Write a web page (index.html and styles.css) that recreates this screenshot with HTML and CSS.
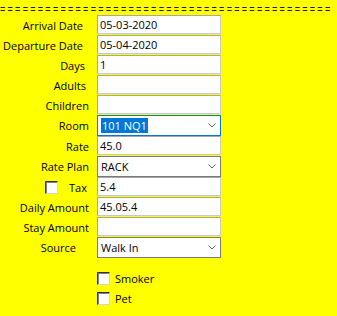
FILE: index.html
```html
<!DOCTYPE html>
<html lang="en">
<head>
<meta charset="utf-8" />
<title>Reservation</title>
<link rel="stylesheet" href="styles.css">
</head>
<body>
<div class="rule">============================================</div>
<div class="form">
  <label class="lbl lbl-date">Arrival Date</label>
  <div class="box">05-03-2020</div>
  <label class="lbl lbl-date">Departure Date</label>
  <div class="box">05-04-2020</div>
  <label class="lbl lbl-days">Days</label>
  <div class="box">1</div>
  <label class="lbl lbl-adults">Adults</label>
  <div class="box"></div>
  <label class="lbl">Children</label>
  <div class="box"></div>
  <label class="lbl lbl-combo">Room</label>
  <div class="combo focused"><span class="sel">101 NQ1</span><svg class="chev" width="8" height="5" viewBox="0 0 8 5"><path d="M0.5 0.5 L4 4 L7.5 0.5" fill="none" stroke="#606060" stroke-width="1"/></svg></div>
  <label class="lbl">Rate</label>
  <div class="box">45.0</div>
  <label class="lbl lbl-combo">Rate Plan</label>
  <div class="combo"><span>RACK</span><svg class="chev" width="8" height="5" viewBox="0 0 8 5"><path d="M0.5 0.5 L4 4 L7.5 0.5" fill="none" stroke="#606060" stroke-width="1"/></svg></div>
  <label class="lbl lbl-tax"><span class="check"></span><span>Tax</span></label>
  <div class="box">5.4</div>
  <label class="lbl">Daily Amount</label>
  <div class="box">45.05.4</div>
  <label class="lbl">Stay Amount</label>
  <div class="box"></div>
  <label class="lbl lbl-combo lbl-source">Source</label>
  <div class="combo"><span>Walk In</span><svg class="chev" width="8" height="5" viewBox="0 0 8 5"><path d="M0.5 0.5 L4 4 L7.5 0.5" fill="none" stroke="#606060" stroke-width="1"/></svg></div>
</div>
<div class="options">
  <label class="opt"><span class="check"></span>Smoker</label>
  <label class="opt"><span class="check"></span>Pet</label>
</div>
</body>
</html>
```

FILE: styles.css
```css
*{box-sizing:border-box;}
body{
  margin:0;
  background:#ffff00;
  color:#000;
  font-family:'Open Sans','Noto Sans',sans-serif;
  font-size:11px;
  height:316px;
  overflow:hidden;
}
.rule{
  font-family:'Liberation Sans',sans-serif;
  font-size:9px;
  line-height:12px;
  height:12px;
  letter-spacing:2.3px;
  white-space:nowrap;
  margin-top:3px;
  color:#1a1a1a;
  transform:scaleY(1.45);
}
.form{
  display:grid;
  grid-template-columns:89px 124px;
  column-gap:8px;
}
.lbl{
  display:flex;
  align-items:center;
  justify-content:flex-end;
  height:20px;
  white-space:nowrap;
}
.lbl-combo{height:21px;}
.lbl-date{padding-right:6px;}
.lbl-days{padding-right:4px;}
.lbl-adults{padding-right:3px;}
.lbl-source{padding-right:13px;}
.lbl-tax{gap:11px;padding-right:2px;}
.box{
  height:19px;
  margin-bottom:1px;
  background:#fff;
  border:1px solid #a6a6a6;
  border-bottom-color:#c8c8c8;
  border-right-color:#c8c8c8;
  padding:0 2px;
  line-height:17px;
  white-space:nowrap;
}
.combo{
  height:21px;
  background:#fff;
  border:1px solid #7a7a7a;
  display:flex;
  align-items:center;
  justify-content:space-between;
  padding:0 4px 0 3px;
}
.combo.focused{border-color:#0078d7;}
.sel{background:#0078d7;color:#fff;padding:0 1px;line-height:15px;}
.chev{display:block;}
.check{
  display:inline-block;
  width:13px;
  height:13px;
  background:#fff;
  border:1px solid #333;
  border-right-color:#d4d4d4;
  border-bottom-color:#d4d4d4;
  box-shadow:inset 1px 1px 0 #808080;
}
.options{
  display:flex;
  flex-direction:column;
  gap:7px;
  margin:14px 0 0 97px;
}
.opt{
  display:flex;
  align-items:center;
  gap:5px;
  height:13px;
}
```
